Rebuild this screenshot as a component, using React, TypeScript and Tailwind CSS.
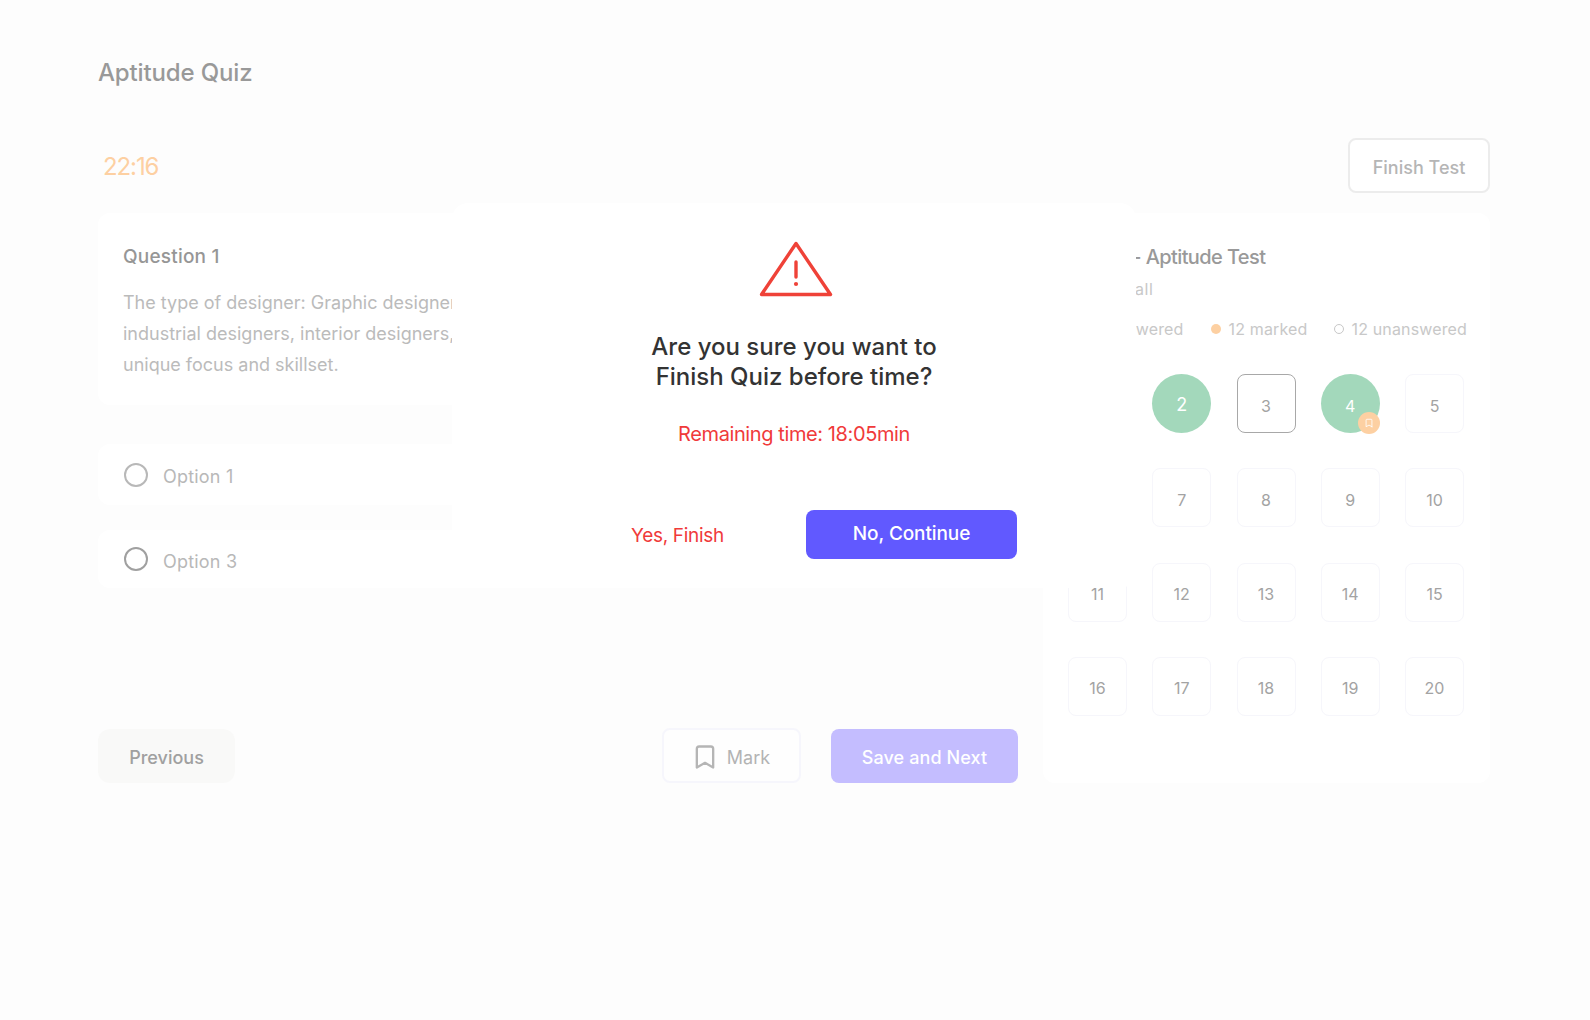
import React from 'react';
import { Bookmark } from 'lucide-react';

const numbers = Array.from({ length: 20 }, (_, i) => i + 1);

const Cell: React.FC<{ n: number }> = ({ n }) => {
  if (n === 2) {
    return (
      <div className="flex h-[59px] w-[59px] items-center justify-center rounded-full bg-[#a3d8bb] pt-[1px] text-[18px] text-white">
        2
      </div>
    );
  }
  if (n === 4) {
    return (
      <div className="relative flex h-[59px] w-[59px] items-center justify-center rounded-full bg-[#a3d8bb] pt-[4px] text-[16px] text-white">
        4
        <span className="absolute left-[37px] top-[38px] flex h-[22px] w-[22px] items-center justify-center rounded-full bg-[#fdd0a2]">
          <Bookmark className="h-[10px] w-[10px] text-white" strokeWidth={2} />
        </span>
      </div>
    );
  }
  return (
    <div
      className={`flex h-[59px] w-[59px] items-center justify-center rounded-lg border pt-[4px] text-[16px] text-[#a3a3a3] ${
        n === 3 ? 'border-[#a8a8a8]' : 'border-[#f6f6fb]'
      }`}
    >
      {n}
    </div>
  );
};

const Option: React.FC<{ label: string; dark?: boolean; className: string }> = ({ label, dark, className }) => (
  <div className={`flex items-center rounded-xl bg-white pl-[26px] ${className}`}>
    <span className={`h-[24px] w-[24px] rounded-full border-2 ${dark ? 'border-[#a0a0a0]' : 'border-[#b8b8b8]'}`} />
    <span className="ml-[15px] pt-[4px] text-[18px] tracking-[0.2px] text-[#b8b8b8]">{label}</span>
  </div>
);

export default function App() {
  return (
    <div className="relative min-h-[1020px] w-full bg-[#fdfdfd] pl-[98px] pr-[100px] pt-[57px] font-['Inter',sans-serif]">
      <h1 className="text-[24px] leading-8 font-medium tracking-[-0.15px] text-[#999999]">Aptitude Quiz</h1>

      <div className="mt-[49px] flex items-center justify-between">
        <span className="pl-[5px] pt-[2px] text-[24px] tracking-[-1.1px] text-[#fdd0a2]">22:16</span>
        <button className="h-[55px] w-[142px] rounded-lg border-2 border-[#ececec] bg-white pt-[3px] text-[18px] font-medium text-[#b5b5b5]">
          Finish Test
        </button>
      </div>

      <div className="mt-[20px] flex gap-[25px]">
        <div className="flex h-[570px] w-[920px] flex-col">
          <div className="h-[192px] rounded-xl bg-white px-[25px] pt-[32px]">
            <h2 className="text-[19px] leading-6 font-medium tracking-[0.2px] text-[#969696]">Question 1</h2>
            <p className="mt-[18px] text-[18px] leading-[31px] text-[#bbbbbb]">
              The type of designer: Graphic designers, web designers, product designers,
              <br />
              industrial designers, interior designers,
              <br />
              unique focus and skillset.
            </p>
          </div>

          <div className="mt-[39px] grid grid-cols-2 gap-x-[19px] gap-y-[25px]">
            <Option label="Option 1" className="h-[61px]" />
            <Option label="Option 2" className="h-[61px]" />
            <Option label="Option 3" dark className="h-[58px]" />
            <Option label="Option 4" className="h-[58px]" />
          </div>

          <div className="mt-auto flex items-center">
            <button className="h-[54px] w-[137px] rounded-xl bg-[#f9f9f8] pt-[3px] text-[18px] font-medium text-[#a0a0a0]">
              Previous
            </button>
            <button className="ml-auto flex h-[55px] w-[139px] items-center justify-center gap-[8px] rounded-lg border-2 border-[#f6f6fc] bg-[#fefefe] pr-[2px] pt-[3px] text-[18px] text-[#b3b3b3]">
              <Bookmark className="h-[28px] w-[28px] text-[#b5b5b5]" strokeWidth={2} />
              Mark
            </button>
            <button className="ml-[30px] h-[54px] w-[187px] rounded-lg bg-[#c4bdff] pt-[3px] text-[18px] font-medium tracking-[0.1px] text-white">
              Save and Next
            </button>
          </div>
        </div>

        <div className="h-[570px] w-[447px] rounded-xl bg-white pl-[25px] pr-[23px] pt-[32px]">
          <h2 className="text-[20px] leading-6 font-medium tracking-[-0.6px] text-[#999999]">Quiz A - Aptitude Test</h2>
          <p className="mt-[8px] text-[16px] leading-6 tracking-[0.45px] text-[#c8c8c8]">Attempt all</p>
          <div className="mt-[16px] flex items-center justify-end gap-[27px] text-[16px] leading-6 tracking-[0.15px] text-[#c8c8c8]">
            <span>12 answered</span>
            <span className="flex items-center gap-[8px]">
              <span className="h-[10px] w-[10px] rounded-full bg-[#fdd0a2]" />
              12 marked
            </span>
            <span className="flex items-center gap-[7px]">
              <span className="h-[10px] w-[10px] rounded-full border border-[#c8c8c8]" />
              12 unanswered
            </span>
          </div>
          <div className="mt-[33px] grid w-[396px] grid-cols-[repeat(5,59px)] justify-between gap-y-[35.3px]">
            {numbers.map((n) => (
              <Cell key={n} n={n} />
            ))}
          </div>
        </div>
      </div>

      {/* confirm dialog, sits over the quiz */}
      <div className="absolute left-[452px] top-[203px] flex h-[385px] w-[684px] flex-col items-center rounded-2xl bg-white pt-[38px]">
        <svg width="74" height="56" viewBox="0 0 74 56" fill="none" className="ml-[4px]">
          <path
            d="M37 2.5 L71.5 53.5 H2.5 Z"
            stroke="#ef4238"
            strokeWidth="3.4"
            strokeLinejoin="round"
          />
          <path d="M37 21 V36" stroke="#ef4238" strokeWidth="3.4" strokeLinecap="round" />
          <circle cx="37" cy="43" r="2.1" fill="#ef4238" />
        </svg>
        <h2 className="mt-[35px] text-center text-[24px] leading-[30px] font-medium text-[#333333]">
          Are you sure you want to
          <br />
          Finish Quiz before time?
        </h2>
        <p className="mt-[28px] text-[20px] leading-7 tracking-[-0.4px] text-[#f03a3a]">Remaining time: 18:05min</p>
        <div className="mt-[62px] flex w-full items-center pl-[179px]">
          <button className="pt-[3px] text-[19px] tracking-[-0.3px] text-[#f03a3a]">Yes, Finish</button>
          <button className="ml-auto mr-[119px] h-[49px] w-[211px] rounded-lg bg-[#6159ff] text-[19px] font-medium tracking-[-0.1px] text-white">
            No, Continue
          </button>
        </div>
      </div>
    </div>
  );
}
